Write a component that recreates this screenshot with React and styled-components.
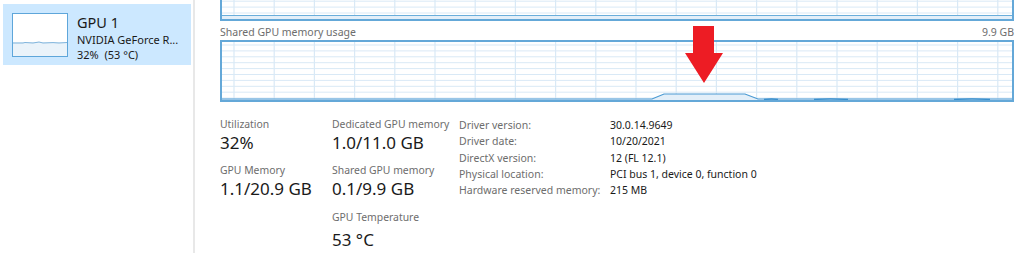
import React from 'react';
import styled, { createGlobalStyle } from 'styled-components';

const Global = createGlobalStyle`
  html, body { margin: 0; padding: 0; background: #fff; }
  body {
    font-family: "Noto Sans", "Open Sans", sans-serif;
    color: #1a1a1a;
    overflow: hidden;
  }
`;

const Page = styled.div`
  display: flex;
  width: 1024px;
  height: 253px;
  overflow: hidden;
`;

const Sidebar = styled.div`
  width: 195px;
  flex: none;
  border-right: 2px solid #e8e8e8;
  padding-top: 4px;
  box-sizing: border-box;
`;

const DeviceItem = styled.div`
  display: flex;
  gap: 9px;
  margin-left: 3px;
  width: 188px;
  height: 61px;
  box-sizing: border-box;
  padding: 9px 0 0 9px;
  background: ${p => (p.selected ? '#cce8ff' : 'transparent')};
`;

const Thumb = styled.div`
  width: 56px;
  height: 44px;
  box-sizing: border-box;
  border: 1px solid #5ea6da;
  background: #fff;
  flex: none;
  overflow: hidden;
`;

const DeviceText = styled.div`
  display: flex;
  flex-direction: column;
`;

const DeviceName = styled.div`
  font-size: 14.5px;
  line-height: 19px;
  color: #1a1a1a;
`;

const DeviceSub = styled.div`
  font-size: 11px;
  line-height: 15px;
  color: #1a1a1a;
  white-space: nowrap;
`;

const Main = styled.div`
  flex: 1;
  padding-left: 25px;
  padding-right: 10px;
  display: flex;
  flex-direction: column;
  & > * { flex: none; }
`;

const ChartTail = styled.div`
  height: 21px;
  box-sizing: border-box;
  border: 2px solid #64a8d8;
  border-top: none;
  overflow: hidden;
  svg { display: block; }
`;

const ChartHeader = styled.div`
  display: flex;
  justify-content: space-between;
  font-size: 10.5px;
  line-height: 14px;
  color: #6d6d6d;
  margin-top: 4px;
  height: 15px;
`;

const ChartBox = styled.div`
  position: relative;
  height: 62px;
  box-sizing: border-box;
  border: 2px solid #64a8d8;
  svg { display: block; }
`;

const Arrow = styled.svg`
  position: absolute;
  left: 461px;
  top: -16px;
`;

const Stats = styled.div`
  display: flex;
  align-items: flex-start;
  margin-top: 15px;
`;

const StatCol = styled.div`
  display: flex;
  flex-direction: column;
  width: ${p => p.w}px;
  flex: none;
`;

const StatLabel = styled.div`
  font-size: 10.4px;
  line-height: 15px;
  color: #6d6d6d;
  white-space: nowrap;
  margin-top: ${p => p.gap || 0}px;
`;

const StatValue = styled.div`
  font-size: 17px;
  line-height: 21px;
  color: #1a1a1a;
  margin-top: ${p => p.gap || 0}px;
  margin-bottom: 10px;
  white-space: nowrap;
`;

const InfoGrid = styled.div`
  display: grid;
  grid-template-columns: 151px auto;
  font-size: 10.5px;
  line-height: 16.25px;
`;

const InfoKey = styled.div`
  color: #6d6d6d;
  white-space: nowrap;
`;

const InfoVal = styled.div`
  color: #1a1a1a;
  white-space: nowrap;
`;

const W = 790;
const GRID = '#d9e9f6';

function GridLines({ h, offsetY }) {
  const v = [];
  for (let k = 0; k < 20; k++) {
    const x = 12 + k * 40.2;
    v.push(<line key={'v' + k} x1={x} y1={0} x2={x} y2={h} stroke={GRID} strokeWidth="1.2" />);
  }
  const hz = [];
  for (let y = offsetY; y < h; y += 5.9) {
    hz.push(<line key={'h' + y} x1={0} y1={y} x2={W} y2={y} stroke={GRID} strokeWidth="1" />);
  }
  return <g>{v}{hz}</g>;
}

const sharedData = 'M0 57 L430 57 L442 52 L523 52 L536 57 L790 57';

export default function App() {
  return (
    <Page>
      <Global />
      <Sidebar>
        <DeviceItem selected>
          <Thumb>
            <svg width="54" height="42">
              <rect x="0" y="28" width="54" height="14" fill="#eaf3fa" />
              <path d="M0 29 L10 29 L12 28.5 L20 29 L26 28 L30 29 L40 28.6 L46 29 L54 28.5" stroke="#7fb4dc" fill="none" strokeWidth="1" />
            </svg>
          </Thumb>
          <DeviceText>
            <DeviceName>GPU 1</DeviceName>
            <DeviceSub>NVIDIA GeForce R...</DeviceSub>
            <DeviceSub>32%&nbsp;&nbsp;(53 °C)</DeviceSub>
          </DeviceText>
        </DeviceItem>
      </Sidebar>
      <Main>
        <ChartTail>
          <svg width={W} height={19}>
            <GridLines h={19} offsetY={1.2} />
            <rect x="0" y="15.5" width={W} height="4" fill="#e3eff9" />
            <line x1="0" y1="15.5" x2={W} y2="15.5" stroke="#6aaedb" strokeWidth="1" />
          </svg>
        </ChartTail>
        <ChartHeader>
          <span>Shared GPU memory usage</span>
          <span>9.9 GB</span>
        </ChartHeader>
        <ChartBox>
          <svg width={W} height={58}>
            <GridLines h={58} offsetY={3} />
            <path d={sharedData + ' L790 58 L0 58 Z'} fill="#e3eff9" />
            <path d={sharedData} stroke="#4a9ad3" strokeWidth="1.2" fill="none" />
            <path d="M542 57.5 Q550 56.5 556 57.5" stroke="#3a8fcc" strokeWidth="1.4" fill="none" />
            <path d="M592 57.5 Q608 56.3 626 57.5" stroke="#3a8fcc" strokeWidth="1.4" fill="none" />
            <path d="M732 57.5 Q750 56.3 768 57.5" stroke="#3a8fcc" strokeWidth="1.4" fill="none" />
          </svg>
          <Arrow width="42" height="60" viewBox="0 0 42 60">
            <polygon points="10,0 31,0 31,27 40,27 21,57 2,27 10,27" fill="#ed1c24" />
          </Arrow>
        </ChartBox>
        <Stats>
          <StatCol w={112}>
            <StatLabel>Utilization</StatLabel>
            <StatValue>32%</StatValue>
            <StatLabel>GPU Memory</StatLabel>
            <StatValue>1.1/20.9 GB</StatValue>
          </StatCol>
          <StatCol w={127}>
            <StatLabel>Dedicated GPU memory</StatLabel>
            <StatValue>1.0/11.0 GB</StatValue>
            <StatLabel>Shared GPU memory</StatLabel>
            <StatValue>0.1/9.9 GB</StatValue>
            <StatLabel gap={1}>GPU Temperature</StatLabel>
            <StatValue gap={4}>53 °C</StatValue>
          </StatCol>
          <InfoGrid>
            <InfoKey>Driver version:</InfoKey>
            <InfoVal>30.0.14.9649</InfoVal>
            <InfoKey>Driver date:</InfoKey>
            <InfoVal>10/20/2021</InfoVal>
            <InfoKey>DirectX version:</InfoKey>
            <InfoVal>12 (FL 12.1)</InfoVal>
            <InfoKey>Physical location:</InfoKey>
            <InfoVal>PCI bus 1, device 0, function 0</InfoVal>
            <InfoKey>Hardware reserved memory:</InfoKey>
            <InfoVal>215 MB</InfoVal>
          </InfoGrid>
        </Stats>
      </Main>
    </Page>
  );
}
